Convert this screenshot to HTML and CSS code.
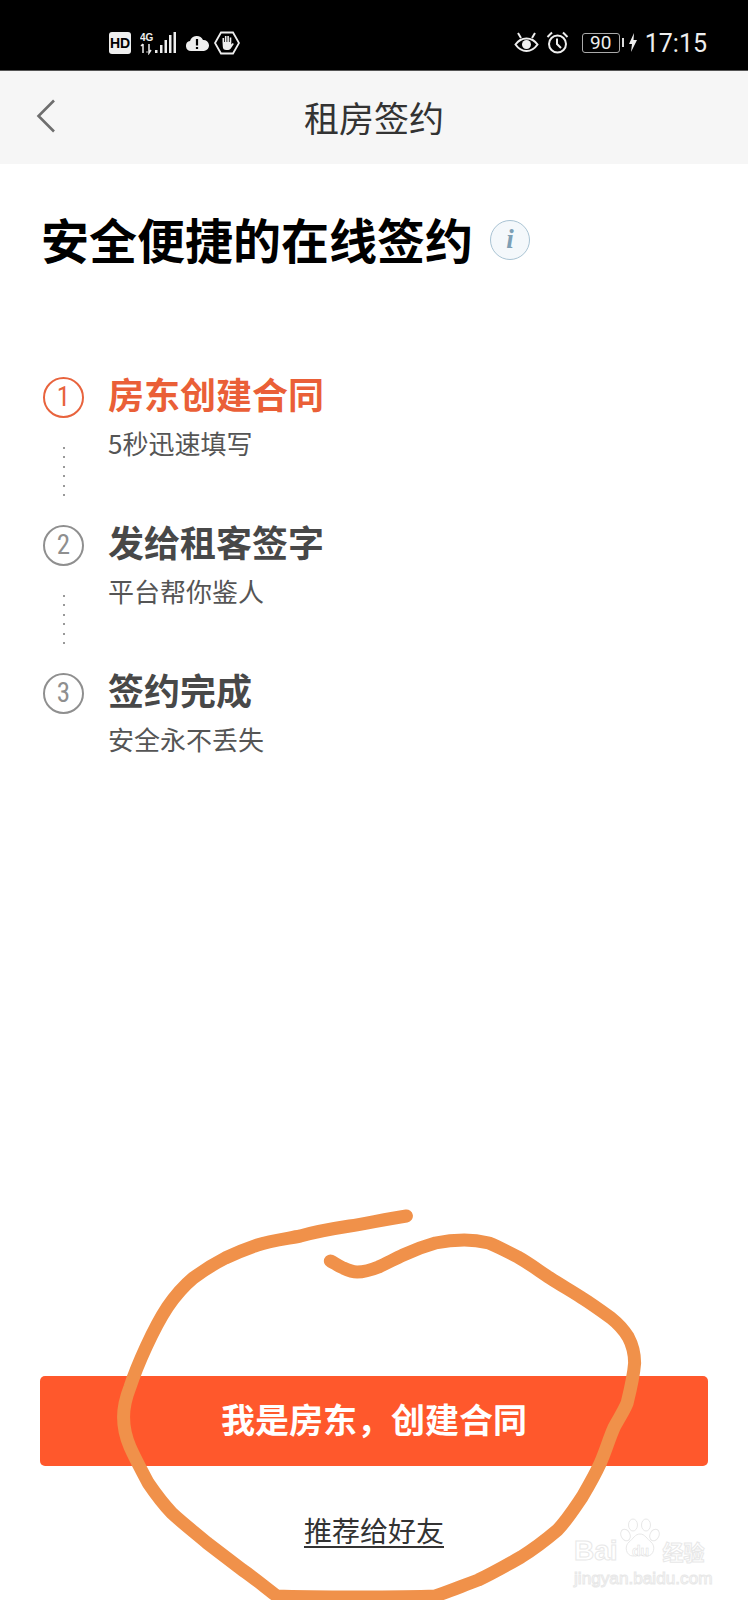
FILE: index.html
```html
<!DOCTYPE html>
<html lang="zh-CN">

<head>
    <meta charset="UTF-8">
    <meta name="viewport" content="width=device-width, initial-scale=1.0">
    <title>租房签约</title>
    <link rel="stylesheet" href="styles.css">
</head>

<body>
    <div class="page">
        <!-- status bar -->
        <div class="status">
            <div class="status-left">
                <span class="hd">HD</span>
                <svg class="ic-signal" width="38" height="24" viewBox="0 0 38 24">
                    <text x="0" y="10" class="ic-4g">4G</text>
                    <path d="M3 13v9M1 15l2-2M9 13v9l2-3M6.500 21h1" fill="none" stroke="#eee" stroke-width="1.500" />
                    <rect x="15" y="19" width="2.500" height="3" fill="#eee" />
                    <rect x="20" y="14" width="2.500" height="8" fill="#eee" />
                    <rect x="24.500" y="9" width="2.500" height="13" fill="#eee" />
                    <rect x="29" y="4" width="2.500" height="18" fill="#eee" />
                    <rect x="33.500" y="1" width="2.500" height="21" fill="#eee" />
                </svg>
                <svg class="ic-cloud" width="24" height="16" viewBox="0 0 24 16">
                    <path d="M6 16a5 5 0 0 1-1-9.900A7 7 0 0 1 18 5a5.500 5.500 0 0 1 1 11z" fill="#eee" />
                    <path d="M12 4v6.500M12 12v2" stroke="#000" stroke-width="2.200" fill="none" />
                </svg>
                <svg class="ic-hand" width="26" height="24" viewBox="0 0 26 24">
                    <path d="M7 1.500h12L25 12l-6 10.500H7L1 12z" fill="none" stroke="#eee" stroke-width="1.800" />
                    <path d="M8.500 11v-4h1.600v4h.8V5h1.600v6h.8V5h1.600v6h.8V6.500h1.600v7l1.500-1.500 1 1-3 4.500a3 3 0 0 1-2.500 1.500h-2a3.500 3.500 0 0 1-3.500-3.500z" fill="#eee" />
                </svg>
            </div>
            <div class="status-right">
                <svg class="ic-eye" width="25" height="21" viewBox="0 0 25 21">
                    <path d="M1.500 12.500C5 7.500 9 6.500 12.500 6.500s7.500 1 11 6c-3.500 5-7.500 6.500-11 6.500s-7.500-1.500-11-6.500z" fill="none" stroke="#eee" stroke-width="2" />
                    <circle cx="12.500" cy="12.500" r="4.500" fill="#eee" />
                    <path d="M4 1l3 5M21 1l-3 5" stroke="#eee" stroke-width="2" fill="none" />
                </svg>
                <svg class="ic-alarm" width="23" height="23" viewBox="0 0 23 23">
                    <circle cx="11.500" cy="13" r="8.500" fill="none" stroke="#eee" stroke-width="2" />
                    <path d="M11 7.500V13l4 4M1.500 6L6 1.500M21.500 6L17 1.500" fill="none" stroke="#eee" stroke-width="2" />
                </svg>
                <span class="battery">90</span>
                <span class="battery-nub"></span>
                <svg class="ic-bolt" width="8" height="19" viewBox="0 0 8 19">
                    <path d="M5 0L0 11h3l-1 8 6-12H4.500z" fill="#eee" />
                </svg>
                <span class="time">17:15</span>
            </div>
        </div>

        <!-- title bar -->
        <div class="nav">
            <svg class="back" width="20" height="34" viewBox="0 0 20 34">
                <path d="M18 1.500L2.500 17 18 32.500" fill="none" stroke="#6e6e6e" stroke-width="2.600" />
            </svg>
            <div class="nav-title">租房签约</div>
        </div>

        <div class="main">
            <div class="heading">
                <h1>安全便捷的在线签约</h1>
                <span class="info">i</span>
            </div>

            <ul class="steps">
                <li class="step step-on">
                    <div class="step-side">
                        <span class="num">1</span>
                        <span class="dots"></span>
                    </div>
                    <div>
                        <div class="step-name">房东创建合同</div>
                        <div class="step-sub">5秒迅速填写</div>
                    </div>
                </li>
                <li class="step">
                    <div class="step-side">
                        <span class="num">2</span>
                        <span class="dots"></span>
                    </div>
                    <div>
                        <div class="step-name">发给租客签字</div>
                        <div class="step-sub">平台帮你鉴人</div>
                    </div>
                </li>
                <li class="step">
                    <div class="step-side">
                        <span class="num">3</span>
                    </div>
                    <div>
                        <div class="step-name">签约完成</div>
                        <div class="step-sub">安全永不丢失</div>
                    </div>
                </li>
            </ul>
        </div>

        <div class="foot">
            <div class="btn">我是房东，创建合同</div>
            <a class="share" href="javascript:;">推荐给好友</a>
        </div>

        <!-- hand drawn circle on top of the screenshot -->
        <svg class="scribble" width="748" height="1600" viewBox="0 0 748 1600">
            <path transform="matrix(1.0714 0 0 1 -7.14 0)" d="M386 1216C368 1219 350 1223 333 1226C315 1229 300 1232 287 1236C272 1239 258 1241 247 1245C236 1249 227 1253 217 1258C206 1264 197 1270 187 1278C177 1287 170 1296 163 1307C155 1320 149 1333 143 1347C137 1361 132 1374 128 1387C124 1398 122 1408 122 1417C122 1427 124 1437 128 1447C133 1459 139 1471 145 1483C152 1494 159 1504 167 1513C177 1523 189 1533 200 1543C211 1552 222 1561 233 1570C244 1578 255 1588 265 1596C290 1597 315 1597 340 1597C365 1597 390 1597 413 1596C427 1591 440 1585 453 1580C467 1573 480 1565 493 1557C505 1549 516 1540 527 1530C536 1520 543 1508 550 1497C556 1486 562 1475 567 1463C572 1451 575 1439 580 1427C584 1419 589 1411 592 1403C595 1390 598 1377 599 1363C599 1353 597 1345 593 1337C589 1330 584 1324 577 1318C568 1311 559 1304 550 1298C540 1291 530 1285 520 1278C510 1271 500 1263 490 1257C481 1252 472 1247 463 1243C455 1241 448 1240 440 1240C431 1240 422 1241 413 1243C403 1246 393 1250 383 1255C375 1259 368 1263 360 1267C353 1270 347 1272 340 1272C335 1272 331 1270 327 1268C322 1266 319 1263 315 1261" />
        </svg>

        <!-- watermark -->
        <div class="mark">
            <svg class="mark-paw" width="40" height="44" viewBox="0 0 40 44">
                <ellipse cx="5.500" cy="17" rx="4.500" ry="6" transform="rotate(-25 5.500 17)" />
                <ellipse cx="13" cy="7" rx="4.500" ry="6" />
                <ellipse cx="26" cy="7" rx="4.500" ry="6" />
                <ellipse cx="34.500" cy="17" rx="4.500" ry="6" transform="rotate(25 34.500 17)" />
                <path d="M20 16c5 0 7 5 11 8 5 4 3 14-4 14-3 0-5-1-7-1s-4 1-7 1c-7 0-9-10-4-14 4-3 6-8 11-8z" />
            </svg>
            <div class="mark-top">
                <span class="mark-bai">Bai</span>
                <span class="mark-du">du</span>
                <span class="mark-jy">经验</span>
            </div>
            <div class="mark-url">jingyan.baidu.com</div>
        </div>
    </div>
</body>

</html>
```

FILE: styles.css
```css
* {
    margin: 0;
    padding: 0;
    box-sizing: border-box;
}

body {
    background-color: #fff;
    font-family: "Noto Sans CJK SC", "Noto Sans", sans-serif;
}

.page {
    position: relative;
    width: 748px;
    height: 1600px;
    overflow: hidden;
    display: flex;
    flex-direction: column;
}

/* status bar */
.status {
    height: 71px;
    flex-shrink: 0;
    background-color: #000;
    border-bottom: 1px solid #555;
    display: flex;
    justify-content: space-between;
    align-items: center;
    padding: 15px 41px 0 109px;
    color: #eee;
}

.status-left,
.status-right {
    display: flex;
    align-items: center;
}

.hd {
    width: 22px;
    height: 22px;
    background-color: #eee;
    border-radius: 3px;
    color: #000;
    font: bold 14px/22px "Liberation Sans", sans-serif;
    text-align: center;
}

.ic-signal {
    margin-left: 9px;
}

.ic-4g {
    font: bold 10px "Liberation Sans", sans-serif;
    fill: #eee;
}

.ic-cloud {
    margin-left: 7px;
}

.ic-hand {
    margin-left: 5px;
}

.ic-alarm {
    margin-left: 7px;
}

.battery {
    width: 38px;
    height: 20px;
    margin-left: 13px;
    border: 1px solid #aaa;
    border-radius: 3px;
    font: 19px/18px Roboto, sans-serif;
    text-align: center;
}

.battery-nub {
    width: 2px;
    height: 9px;
    margin-left: 2px;
    background-color: #ddd;
}

.ic-bolt {
    margin-left: 5px;
}

.time {
    margin-left: 8px;
    padding-top: 2px;
    font: 25px/30px Roboto, sans-serif;
}

/* title bar */
.nav {
    height: 93px;
    flex-shrink: 0;
    background-color: #f6f6f6;
    display: grid;
    grid-template-columns: 1fr auto 1fr;
    align-items: center;
    padding: 0 0 3px 36px;
}

.back {
    margin-top: -1px;
}

.nav-title {
    margin-left: -36px;
    font-size: 35px;
    color: #333;
}

/* content */
.main {
    flex: 1;
    padding: 44px 40px 0 41px;
}

.heading {
    display: flex;
    align-items: center;
}

h1 {
    font-size: 48px;
    line-height: 60px;
    font-weight: bold;
    color: #000;
}

.info {
    width: 40px;
    height: 40px;
    margin: 4px 0 0 17px;
    border: 1px solid #a9c3d3;
    border-radius: 50%;
    background-color: #f4f8fb;
    color: #7d9fb5;
    font: italic bold 27px/36px "Liberation Serif", serif;
    text-align: center;
}

.steps {
    list-style: none;
    margin: 109px 0 0 2px;
}

.step {
    height: 148px;
    display: flex;
    gap: 24px;
}

.step-side {
    width: 41px;
    display: flex;
    flex-direction: column;
    align-items: center;
}

.num {
    width: 41px;
    height: 41px;
    border: 2px solid #8f8f8f;
    border-radius: 50%;
    color: #8f8f8f;
    font: 27px/36px "Roboto", sans-serif;
    font-stretch: condensed;
    text-align: center;
}

.dots {
    width: 2px;
    height: 50px;
    margin-top: 29px;
    background: repeating-linear-gradient(to bottom, #999 0, #999 2px, transparent 2px, transparent 9.400px);
}

.step-name {
    font-size: 36px;
    line-height: 33px;
    font-weight: bold;
    color: #484848;
}

.step-sub {
    margin-top: 17px;
    font-size: 26px;
    line-height: 32px;
    color: #555;
}

.step-on .num {
    border-color: #e8633d;
    color: #e8633d;
}

.step-on .step-name {
    color: #ea5f37;
}

/* bottom */
.foot {
    flex-shrink: 0;
    padding: 0 40px 50px;
    text-align: center;
}

.btn {
    height: 90px;
    background-color: #ff582c;
    border-radius: 5px;
    color: #fff;
    font-size: 34px;
    line-height: 86px;
    font-weight: bold;
}

.share {
    display: inline-block;
    margin-top: 44px;
    font-size: 28px;
    line-height: 40px;
    color: #333;
    text-decoration: underline;
    text-underline-offset: 4px;
}

.scribble {
    position: absolute;
    left: 0;
    top: 0;
}

.scribble path {
    fill: none;
    stroke: #f0914a;
    stroke-width: 13;
    stroke-linecap: round;
    stroke-linejoin: round;
    vector-effect: non-scaling-stroke;
}

/* watermark */
.mark {
    position: absolute;
    left: 574px;
    top: 1518px;
    width: 136px;
    color: #fff;
    -webkit-text-stroke: 1px #e8e8e8;
}

.mark-paw {
    position: absolute;
    left: 46px;
    top: 0;
    fill: #fff;
    stroke: #e8e8e8;
    stroke-width: 1;
}

.mark-top {
    position: relative;
    display: flex;
    align-items: center;
    height: 26px;
    margin-top: 20px;
    font: bold 28px/26px "Liberation Sans", sans-serif;
}

.mark-du {
    width: 28px;
    margin-left: 9px;
    font-size: 14px;
    line-height: 26px;
    text-align: center;
    -webkit-text-stroke: 0.5px #dcdcdc;
}

.mark-jy {
    margin-left: 8px;
    font: bold 21px/26px "Noto Sans CJK SC", sans-serif;
}

.mark-url {
    margin-top: 3px;
    font: 17.200px/22px "Liberation Sans", sans-serif;
}
```
